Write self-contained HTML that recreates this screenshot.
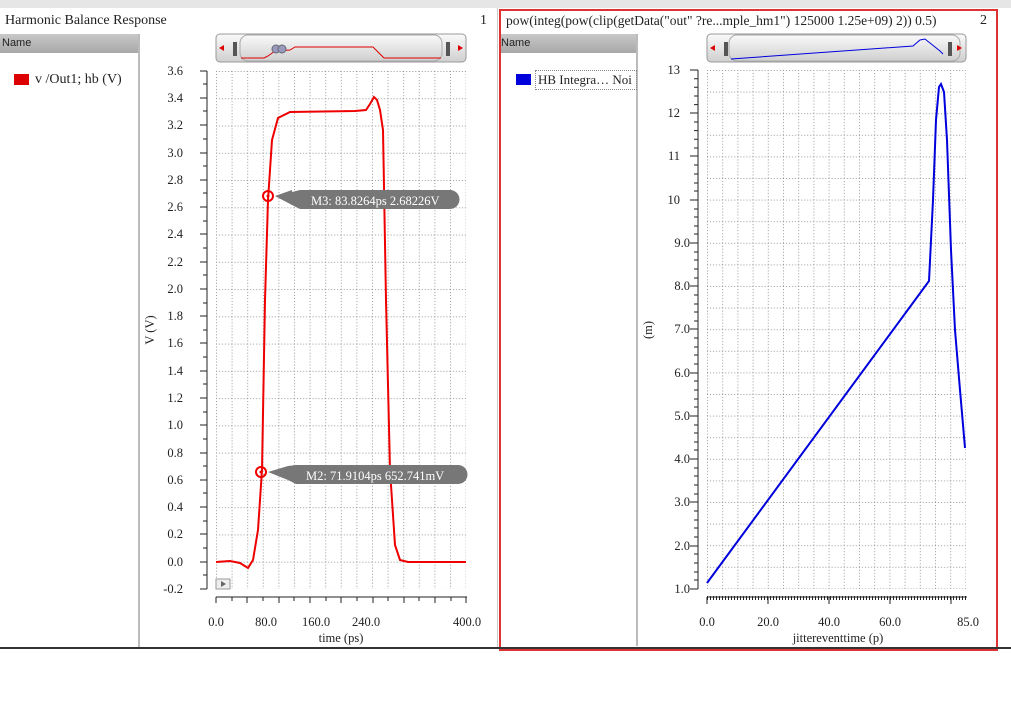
<!DOCTYPE html>
<html><head><style>
body{margin:0;width:1011px;height:716px;background:#fff;font-family:"Liberation Serif",serif;position:relative;overflow:hidden}
.a{position:absolute}
.t{font-size:12px;color:#222}
.hdr{background:linear-gradient(#c8c8c8,#a8a8a8);font-family:"Liberation Sans",sans-serif;font-size:11px;color:#222}
</style></head><body>
<div class="a" style="left:0;top:0;width:1011px;height:8px;background:#e6e6e6"></div>
<div class="a" style="left:0;top:8px;width:497px;height:640px;background:#fff;border-right:1px solid #ccc"></div>
<div class="a t" style="left:5px;top:13px;font-size:14px">Harmonic Balance Response</div>
<div class="a t" style="left:480px;top:13px;font-size:14px">1</div>
<div class="a hdr" style="left:0;top:34px;width:138px;height:19px;line-height:19px;padding-left:2px">Name</div>
<div class="a" style="left:138px;top:34px;width:2px;height:614px;background:#bbb"></div>
<div class="a" style="left:14px;top:74px;width:15px;height:11px;background:#d00"></div>
<div class="a t" style="left:35px;top:72px;font-size:14px">v /Out1; hb (V)</div>
<!-- panel 2 -->
<div class="a" style="left:499px;top:9px;width:495px;height:638px;border:2px solid #d33"></div>
<div class="a t" style="left:506px;top:13px;font-size:13.5px;white-space:nowrap">pow(integ(pow(clip(getData("out" ?re...mple_hm1") 125000 1.25e+09) 2)) 0.5)</div>
<div class="a t" style="left:980px;top:13px;font-size:14px">2</div>
<div class="a hdr" style="left:501px;top:34px;width:135px;height:19px;line-height:19px">Name</div>
<div class="a" style="left:636px;top:34px;width:2px;height:612px;background:#bbb"></div>
<div class="a" style="left:516px;top:74px;width:15px;height:11px;background:#00d"></div>
<div class="a t" style="left:535px;top:70px;width:98px;height:18px;border:1px dotted #888;font-size:13px;line-height:18px;padding-left:2px;white-space:nowrap;overflow:hidden">HB Integra… Noi</div>
<div class="a" style="left:0;top:647px;width:1011px;height:2px;background:#333"></div>
<svg class="a" style="left:0;top:0" width="1011" height="716" font-family="Liberation Serif" font-size="12.5" fill="#222">
<defs>
<linearGradient id="g" x1="0" y1="0" x2="0" y2="1"><stop offset="0" stop-color="#fafafa"/><stop offset="1" stop-color="#cfcfcf"/></linearGradient>
<pattern id="gx1" width="15.6" height="27.26" patternUnits="userSpaceOnUse" x="216" y="71"><path d="M0.5 0V27.26M0 0.5H15.6" stroke="#999" stroke-dasharray="1,2" fill="none"/></pattern>
<pattern id="gx2" width="15.2" height="21.6" patternUnits="userSpaceOnUse" x="707" y="70"><path d="M0.5 0V21.6M0 0.5H15.2" stroke="#999" stroke-dasharray="1,2" fill="none"/></pattern>
</defs>
<rect x="216" y="34" width="250" height="28" rx="4" fill="url(#g)" stroke="#999"/>
<rect x="240" y="35" width="202" height="26" rx="8" fill="url(#g)" stroke="#aaa"/>
<rect x="233" y="42" width="4" height="14" fill="#555"/><rect x="446" y="42" width="4" height="14" fill="#555"/>
<path d="M219 48l5-3v6z M463 48l-5-3v6z" fill="#d00"/>
<path d="M241 58H264L268 56L275 51L290 50L295 47H373L384 58H441" stroke="#d00" fill="none"/>
<circle cx="276" cy="49" r="4" fill="#99b" stroke="#667"/><circle cx="282" cy="49" r="4" fill="#99b" stroke="#667"/>
<rect x="707" y="34" width="259" height="28" rx="4" fill="url(#g)" stroke="#999"/>
<rect x="729" y="35" width="231" height="26" rx="8" fill="url(#g)" stroke="#aaa"/>
<rect x="724" y="42" width="4" height="14" fill="#555"/><rect x="948" y="42" width="4" height="14" fill="#555"/>
<path d="M710 48l5-3v6z M962 48l-5-3v6z" fill="#d00"/>
<path d="M731 59L913 46L920 40L925 39L940 51L943 54" stroke="#00d" fill="none"/>
<rect x="216" y="71" width="250" height="518" fill="url(#gx1)"/>
<line x1="207" y1="71" x2="207" y2="589" stroke="#222"/>
<g stroke="#222">
<path d="M200 71H207M200 98H207M200 125H207M200 153H207M200 180H207M200 207H207M200 234H207M200 262H207M200 289H207M200 316H207M200 343H207M200 371H207M200 398H207M200 425H207M200 453H207M200 480H207M200 507H207M200 534H207M200 562H207M200 589H207"/>
<path d="M203 84H207M203 111H207M203 139H207M203 166H207M203 193H207M203 221H207M203 248H207M203 275H207M203 303H207M203 330H207M203 357H207M203 384H207M203 412H207M203 439H207M203 466H207M203 493H207M203 521H207M203 548H207M203 575H207"/>
<line x1="216" y1="597" x2="467" y2="597"/>
<path d="M216 597v6M232 597v4M247 597v6M263 597v4M279 597v6M294 597v4M310 597v6M326 597v4M341 597v6M357 597v4M373 597v6M388 597v4M404 597v6M419 597v4M435 597v6M451 597v4M466 597v6"/>
</g>
<g text-anchor="end">
<text x="183" y="75">3.6</text><text x="183" y="102">3.4</text><text x="183" y="129">3.2</text><text x="183" y="157">3.0</text><text x="183" y="184">2.8</text><text x="183" y="211">2.6</text><text x="183" y="238">2.4</text><text x="183" y="266">2.2</text><text x="183" y="293">2.0</text><text x="183" y="320">1.8</text><text x="183" y="347">1.6</text><text x="183" y="375">1.4</text><text x="183" y="402">1.2</text><text x="183" y="429">1.0</text><text x="183" y="457">0.8</text><text x="183" y="484">0.6</text><text x="183" y="511">0.4</text><text x="183" y="538">0.2</text><text x="183" y="566">0.0</text><text x="183" y="593">-0.2</text>
</g>
<g text-anchor="middle"><text x="216" y="626">0.0</text><text x="266" y="626">80.0</text><text x="316" y="626">160.0</text><text x="366" y="626">240.0</text><text x="467" y="626">400.0</text><text x="341" y="642">time (ps)</text></g>
<text transform="translate(154,330) rotate(-90)" text-anchor="middle">V (V)</text>
<rect x="216" y="579" width="14" height="10" fill="#eee" stroke="#999"/><path d="M221 581v6l5-3z" fill="#666"/>
<path d="M216 562L230 561L240 563L248 568L253 560L258 530L262 470L265 300L268 200L272 140L278 118L290 112L355 111L366 110L370 104L374 97L377 100L380 110L383 130L386 300L390 470L395 545L400 560L408 562L466 562" stroke="#e00" stroke-width="2" fill="none"/>
<circle cx="268" cy="196" r="5" fill="none" stroke="#e00" stroke-width="2"/><circle cx="268" cy="196" r="1.5" fill="#e00"/>
<circle cx="261" cy="472" r="5" fill="none" stroke="#e00" stroke-width="2"/><circle cx="261" cy="472" r="1.5" fill="#e00"/>
<path d="M275 196L292 190V192L300 190H450A8 8 0 0 1 450 209H300L292 205Z" fill="#777"/>
<path d="M268 472L288 466L296 465H458A8 8 0 0 1 458 484H296L288 480Z" fill="#777"/>
<text x="311" y="205" fill="#fff">M3: 83.8264ps 2.68226V</text>
<text x="306" y="480" fill="#fff">M2: 71.9104ps 652.741mV</text>
<rect x="707" y="70" width="259" height="519" fill="url(#gx2)"/>
<line x1="698" y1="70" x2="698" y2="589" stroke="#222"/>
<g stroke="#222">
<path d="M690 70H698M690 113H698M690 156H698M690 200H698M690 243H698M690 286H698M690 329H698M690 373H698M690 416H698M690 459H698M690 502H698M690 546H698M690 589H698"/>
<path d="M694 78.7H698M694 87.3H698M694 96H698M694 104.6H698M694 122H698M694 130.6H698M694 139.2H698M694 148H698M694 165H698M694 174H698M694 183H698M694 191H698M694 209H698M694 217H698M694 226H698M694 234H698M694 252H698M694 260H698M694 269H698M694 278H698M694 295H698M694 304H698M694 312H698M694 321H698M694 338H698M694 347H698M694 355H698M694 364H698M694 381H698M694 390H698M694 399H698M694 407H698M694 425H698M694 433H698M694 442H698M694 450H698M694 468H698M694 476H698M694 485H698M694 494H698M694 511H698M694 520H698M694 528H698M694 537H698M694 554H698M694 563H698M694 572H698M694 580H698"/>
<line x1="707" y1="597" x2="967" y2="597"/>
<path d="M707 598H967" stroke-width="4" stroke-dasharray="1,2"/>
<path d="M707 597v7M768 597v7M829 597v7M890 597v7M951 597v7"/>
</g>
<g text-anchor="end">
<text x="680" y="74">13</text><text x="680" y="117">12</text><text x="680" y="160">11</text><text x="680" y="204">10</text><text x="690" y="247">9.0</text><text x="690" y="290">8.0</text><text x="690" y="333">7.0</text><text x="690" y="377">6.0</text><text x="690" y="420">5.0</text><text x="690" y="463">4.0</text><text x="690" y="506">3.0</text><text x="690" y="550">2.0</text><text x="690" y="593">1.0</text>
</g>
<g text-anchor="middle"><text x="707" y="626">0.0</text><text x="768" y="626">20.0</text><text x="829" y="626">40.0</text><text x="890" y="626">60.0</text><text x="968" y="626">85.0</text><text x="838" y="642">jittereventtime (p)</text></g>
<text transform="translate(652,330) rotate(-90)" text-anchor="middle">(m)</text>
<path d="M707 583L929 281L933 200L936 120L939 87L941 84L944 92L947 140L951 250L955 330L960 390L965 448" stroke="#00d" stroke-width="2" fill="none"/>
</svg>
</body></html>
